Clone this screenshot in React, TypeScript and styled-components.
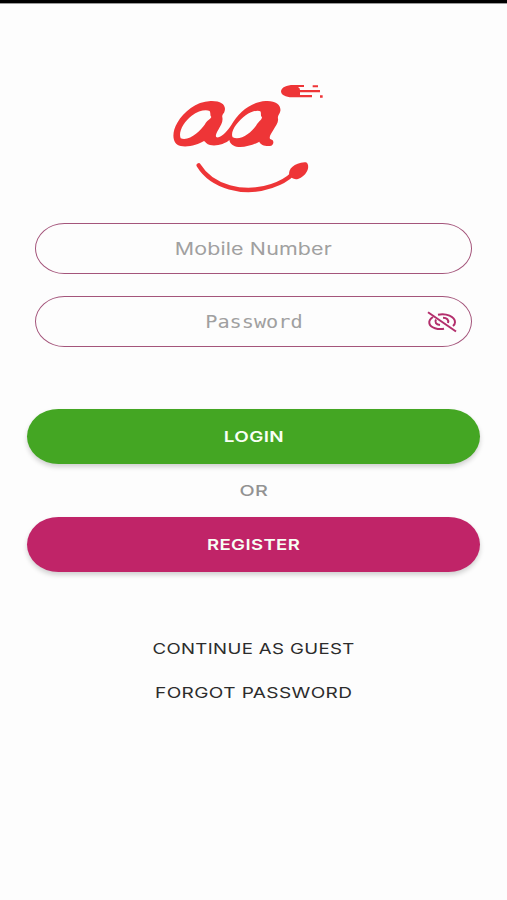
import React from 'react';
import styled, { createGlobalStyle } from 'styled-components';

const GlobalStyle = createGlobalStyle`
  * { box-sizing: border-box; }
  body { margin: 0; background: #fdfdfd; }
`;

const Screen = styled.main`
  display: flex;
  flex-direction: column;
  align-items: center;
  height: 900px;
  overflow: hidden;
  background: #fdfdfd;
  border-top: 3px solid #000;
  box-shadow: inset 0 1px 0 #9b9b9b;
  font-family: Inter, sans-serif;
`;

const Logo = styled.svg`
  display: block;
  width: 180px;
  height: 125px;
  margin: 72px 7px 0 0;
  flex: none;
`;

const Fields = styled.form`
  display: flex;
  flex-direction: column;
  gap: 22px;
  width: 437px;
  margin-top: 23px;
`;

const Field = styled.label`
  display: grid;
  grid-template-columns: 45px 1fr 45px;
  align-items: center;
  height: 51px;
  border: 1.5px solid #a4557b;
  border-radius: 30px / 26px;
`;

const Text = styled.span<{ $stretch: number; $spacing?: number }>`
  display: inline-block;
  white-space: nowrap;
  letter-spacing: ${(p) => p.$spacing ?? 0}px;
  transform: scaleX(${(p) => p.$stretch});
`;

const Placeholder = styled.span<{ $mono?: boolean }>`
  grid-column: 2;
  text-align: center;
  color: #a0a0a0;
  font: 400 17px/24px ${(p) => (p.$mono ? '"DejaVu Sans Mono", monospace' : 'Inter, sans-serif')};
`;

const EyeIcon = styled.svg`
  width: 30px;
  height: 22px;
  margin-left: 1px;
`;

const Actions = styled.section`
  display: flex;
  flex-direction: column;
  align-items: center;
  width: 453px;
  margin-top: 62px;
`;

const Button = styled.button<{ $color: string }>`
  width: 100%;
  height: 55px;
  padding: 1px 0 0;
  border: 0;
  border-radius: 32px / 28px;
  background: ${(p) => p.$color};
  box-shadow: 0 3px 5px rgba(0, 0, 0, 0.18);
  color: #f8fff4;
  font: 600 15px/20px Inter, sans-serif;
`;

const Divider = styled.div`
  height: 53px;
  color: #929292;
  font-size: 15px;
  font-weight: 500;
  line-height: 53px;
`;

const Links = styled.nav`
  display: flex;
  flex-direction: column;
  align-items: center;
  gap: 20px;
  margin-top: 65px;
`;

const Link = styled.a`
  color: #2c2c2c;
  font-size: 15px;
  line-height: 24px;
`;

export default function App() {
  return (
    <>
      <GlobalStyle />
      <Screen>
        <Logo viewBox="0 0 540 375" fill="#ee3537" aria-label="aa">
          <path
            fillRule="evenodd"
            d="M62 213C36 208 34 172 52 143C72 110 107 80 152 78C184 77 199 90 194 108C192 117 185 118 187 127C190 140 182 152 175 164C166 179 164 190 176 187C190 182 202 168 214 150C236 113 271 81 317 78C347 76 364 90 361 108C359 119 352 121 354 131C356 143 347 153 340 165C332 178 325 189 332 193C343 195 342 208 334 212C319 216 301 210 298 200C285 208 255 218 235 216C220 214 210 207 208 195C195 207 170 214 150 210C140 208 136 200 132 198C115 208 85 218 62 213Z
            M62 190C54 170 72 140 95 122C115 107 137 103 149 108C153 115 149 121 154 126C150 134 140 137 135 148C121 168 88 200 62 190Z
            M218 187C209 170 234 138 257 121C274 109 294 104 301 109C305 115 300 121 306 127C304 137 295 140 289 151C274 174 240 199 218 187Z"
          />
          <path d="M363 49C364 37 380 30 400 30H432V36H414Q420 39 420 45H480V52H420V60H456V67H400C378 68 363 60 363 49Z" />
          <path d="M458 31h16v6h-16zM480 61h8v7h-8z" />
          <path d="M116 271C155 335 250 362 335 333C362 324 382 313 398 297" fill="none" stroke="#ee3537" strokeWidth="13" strokeLinecap="round" />
          <path d="M388 301C383 282 403 264 434 262Q441 260 443 267C449 281 438 303 414 312C402 315 393 309 388 301Z" />
        </Logo>
        <Fields>
          <Field>
            <Placeholder><Text $stretch={1.26} $spacing={0.1}>Mobile Number</Text></Placeholder>
          </Field>
          <Field>
            <Placeholder $mono><Text $stretch={1.19}>Password</Text></Placeholder>
            <EyeIcon viewBox="0 0 30 22" fill="none" stroke="#b32e6c" strokeWidth="2">
              <path d="M1 1.2 29 20.5" />
              <path d="M6 6C.5 9.5 1 15 8 17.2C11 18.2 14 18.4 17 17.7M11 3.8C19 2 28 5.5 28 11.3C28 12.8 27.2 14 26 15M9 8.6C7.5 11.3 9 13.3 13 14M16 6.8C20 6.8 22 9 21 12" />
            </EyeIcon>
          </Field>
        </Fields>
        <Actions>
          <Button $color="#44a623"><Text $stretch={1.26} $spacing={0.3}>LOGIN</Text></Button>
          <Divider><Text $stretch={1.32} $spacing={0.3}>OR</Text></Divider>
          <Button $color="#c02468"><Text $stretch={1.24} $spacing={0.3}>REGISTER</Text></Button>
        </Actions>
        <Links>
          <Link><Text $stretch={1.24} $spacing={0.3}>CONTINUE AS GUEST</Text></Link>
          <Link><Text $stretch={1.27} $spacing={0.3}>FORGOT PASSWORD</Text></Link>
        </Links>
      </Screen>
    </>
  );
}
